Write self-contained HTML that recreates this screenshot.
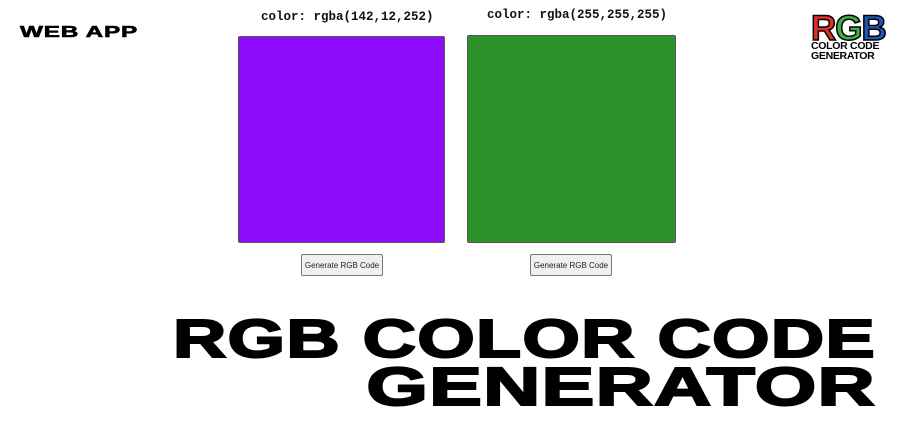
<!DOCTYPE html>
<html><head><style>
body{margin:0;width:900px;height:440px;background:#fff;position:relative;overflow:hidden;font-family:"Liberation Sans",sans-serif}
.a{position:absolute}
.lbl{font-family:"Liberation Mono",monospace;font-weight:bold;font-size:12.5px;color:#111;white-space:nowrap}
.btn{position:absolute;height:22px;border:1px solid #777;border-radius:2px;background:#f0f0f0;font-size:8px;color:#222;display:flex;align-items:center;justify-content:center;box-sizing:border-box}
.big{position:absolute;right:24px;font-weight:900;font-size:54px;line-height:1;white-space:nowrap;transform-origin:right top;color:#000;letter-spacing:1px;-webkit-text-stroke:2px #000}
</style></head><body>
<div class="a" style="left:20px;top:24px;font-weight:900;font-size:16px;transform:scaleX(1.52);transform-origin:left top;letter-spacing:0.5px;-webkit-text-stroke:0.6px #000">WEB APP</div>
<div class="a lbl" style="left:261px;top:10px">color: rgba(142,12,252)</div>
<div class="a lbl" style="left:487px;top:8px">color: rgba(255,255,255)</div>
<div class="a" style="left:238px;top:36px;width:205px;height:205px;background:#8e0cfc;border:1px solid #555;border-radius:2px"></div>
<div class="a" style="left:467px;top:35px;width:207px;height:206px;background:#2e912a;border:1px solid #555;border-radius:2px"></div>
<div class="btn" style="left:301px;top:254px;width:82px">Generate RGB Code</div>
<div class="btn" style="left:530px;top:254px;width:82px">Generate RGB Code</div>
<div class="a" style="left:811px;top:11px;font-weight:900;font-size:35px;line-height:1;letter-spacing:-1px;-webkit-text-stroke:1.5px #000"><span style="color:#e0302a">R</span><span style="color:#3cb043">G</span><span style="color:#1f55b5">B</span></div>
<div class="a" style="left:811px;top:41px;font-weight:bold;font-size:10.5px;line-height:10px;letter-spacing:-0.3px">COLOR CODE<br>GENERATOR</div>
<div class="big" style="top:312px;transform:scaleX(1.365)">RGB COLOR CODE</div>
<div class="big" style="top:360px;transform:scaleX(1.46)">GENERATOR</div>
</body></html>
